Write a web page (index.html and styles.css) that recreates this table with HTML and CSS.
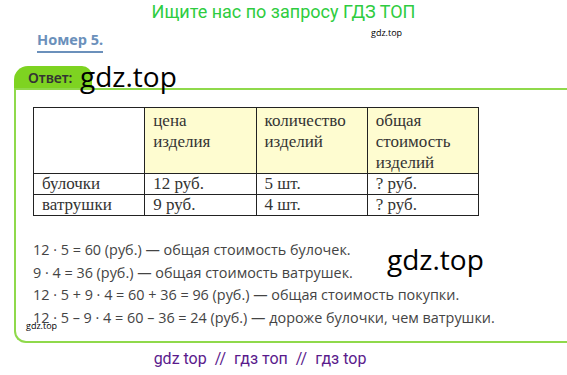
FILE: index.html
```html
<!DOCTYPE html>
<html lang="ru">
<head>
<meta charset="utf-8">
<link rel="stylesheet" href="styles.css">
</head>
<body>
<div class="page">
  <div class="banner">Ищите нас по запросу ГДЗ ТОП</div>
  <div class="num-row">
    <span class="num">Номер 5.</span>
    <span class="wm wm-small wm-top">gdz.top</span>
  </div>
  <div class="answer">
    <div class="tab-row">
      <span class="tab">Ответ:</span>
      <span class="wm wm-big wm-tab">gdz.top</span>
    </div>
    <div class="box">
      <table class="tbl">
        <tr class="head">
          <td class="c1"></td>
          <td class="y">цена<br>изделия</td>
          <td class="y">количество<br>изделий</td>
          <td class="y">общая<br>стоимость<br>изделий</td>
        </tr>
        <tr>
          <td>булочки</td>
          <td>12 руб.</td>
          <td>5 шт.</td>
          <td>? руб.</td>
        </tr>
        <tr>
          <td>ватрушки</td>
          <td>9 руб.</td>
          <td>4 шт.</td>
          <td>? руб.</td>
        </tr>
      </table>
      <div class="lines">
        <p>12 · 5 = 60 (руб.) — общая стоимость булочек.</p>
        <p>9 · 4 = 36 (руб.) — общая стоимость ватрушек.</p>
        <p>12 · 5 + 9 · 4 = 60 + 36 = 96 (руб.) — общая стоимость покупки.</p>
        <p>12 · 5 – 9 · 4 = 60 – 36 = 24 (руб.) — дороже булочки, чем ватрушки.</p>
        <span class="wm wm-big wm-mid">gdz.top</span>
        <span class="wm wm-small wm-bot">gdz.top</span>
      </div>
    </div>
  </div>
  <div class="footer">gdz top &nbsp;//&nbsp; гдз топ &nbsp;//&nbsp; гдз top</div>
</div>
</body>
</html>
```
FILE: styles.css
```css
html, body {
  margin: 0;
  padding: 0;
  background: #fff;
}
.page {
  width: 567px;
  height: 375px;
  overflow: hidden;
  position: relative;
  font-family: Roboto, "Liberation Sans", sans-serif;
}
.banner {
  text-align: center;
  color: #2ecc40;
  font-size: 18px;
  line-height: 20px;
  padding-top: 2px;
}
.num-row {
  position: relative;
  height: 30px;
  padding-left: 37px;
  padding-top: 8px;
  box-sizing: border-box;
}
.num {
  display: inline-block;
  font-family: "Noto Sans", sans-serif;
  font-weight: bold;
  color: #6b90bb;
  font-size: 14.5px;
  line-height: 18px;
  border-bottom: 2px solid #6b90bb;
  padding-bottom: 3px;
}
.wm {
  position: absolute;
  color: #000;
  font-family: "Open Sans", sans-serif;
}
.wm-small { font-size: 9px; line-height: 10px; }
.wm-big { font-size: 28px; line-height: 32px; }
.wm-top { left: 371px; top: 6px; }
.answer {
  margin-left: 14px;
  margin-top: 14px;
}
.tab-row {
  position: relative;
  height: 22px;
}
.tab {
  display: inline-block;
  background: #7ed321;
  color: #333;
  font-family: "Noto Sans", sans-serif;
  font-weight: 600;
  font-size: 14px;
  line-height: 23px;
  padding: 0 20px 0 14px;
  border-radius: 14px 10px 0 0;
  height: 22px;
}
.wm-tab { left: 66px; top: -6px; }
.box {
  border: 2px solid #8fd94b;
  border-right: none;
  border-radius: 0 0 0 12px;
  padding: 17px 0 0 17px;
  height: 255px;
  box-sizing: border-box;
}
.tbl {
  border-collapse: collapse;
  table-layout: fixed;
  width: 446px;
  font-family: "Liberation Serif", serif;
  font-size: 17px;
  color: #333;
  line-height: 20px;
}
.tbl td {
  border: 1.5px solid #222;
  padding: 0 4px 0 8px;
  vertical-align: top;
  height: 20px;
}
.tbl tr.head td { height: 61px; padding-top: 2px; line-height: 21px; }
.tbl td.y { background: #fefcd0; }
.lines {
  position: relative;
  margin-top: 23px;
  font-family: "Open Sans", sans-serif;
  font-size: 14.4px;
  color: #444;
}
.lines p {
  margin: 0;
  line-height: 22.7px;
}
.wm-mid { left: 354px; top: 4px; }
.wm-bot { left: -7px; top: 82px; }
.footer {
  text-align: center;
  color: #5a1a8c;
  font-size: 16px;
  line-height: 20px;
  margin-top: 6px;
  padding-right: 47px;
}
```
